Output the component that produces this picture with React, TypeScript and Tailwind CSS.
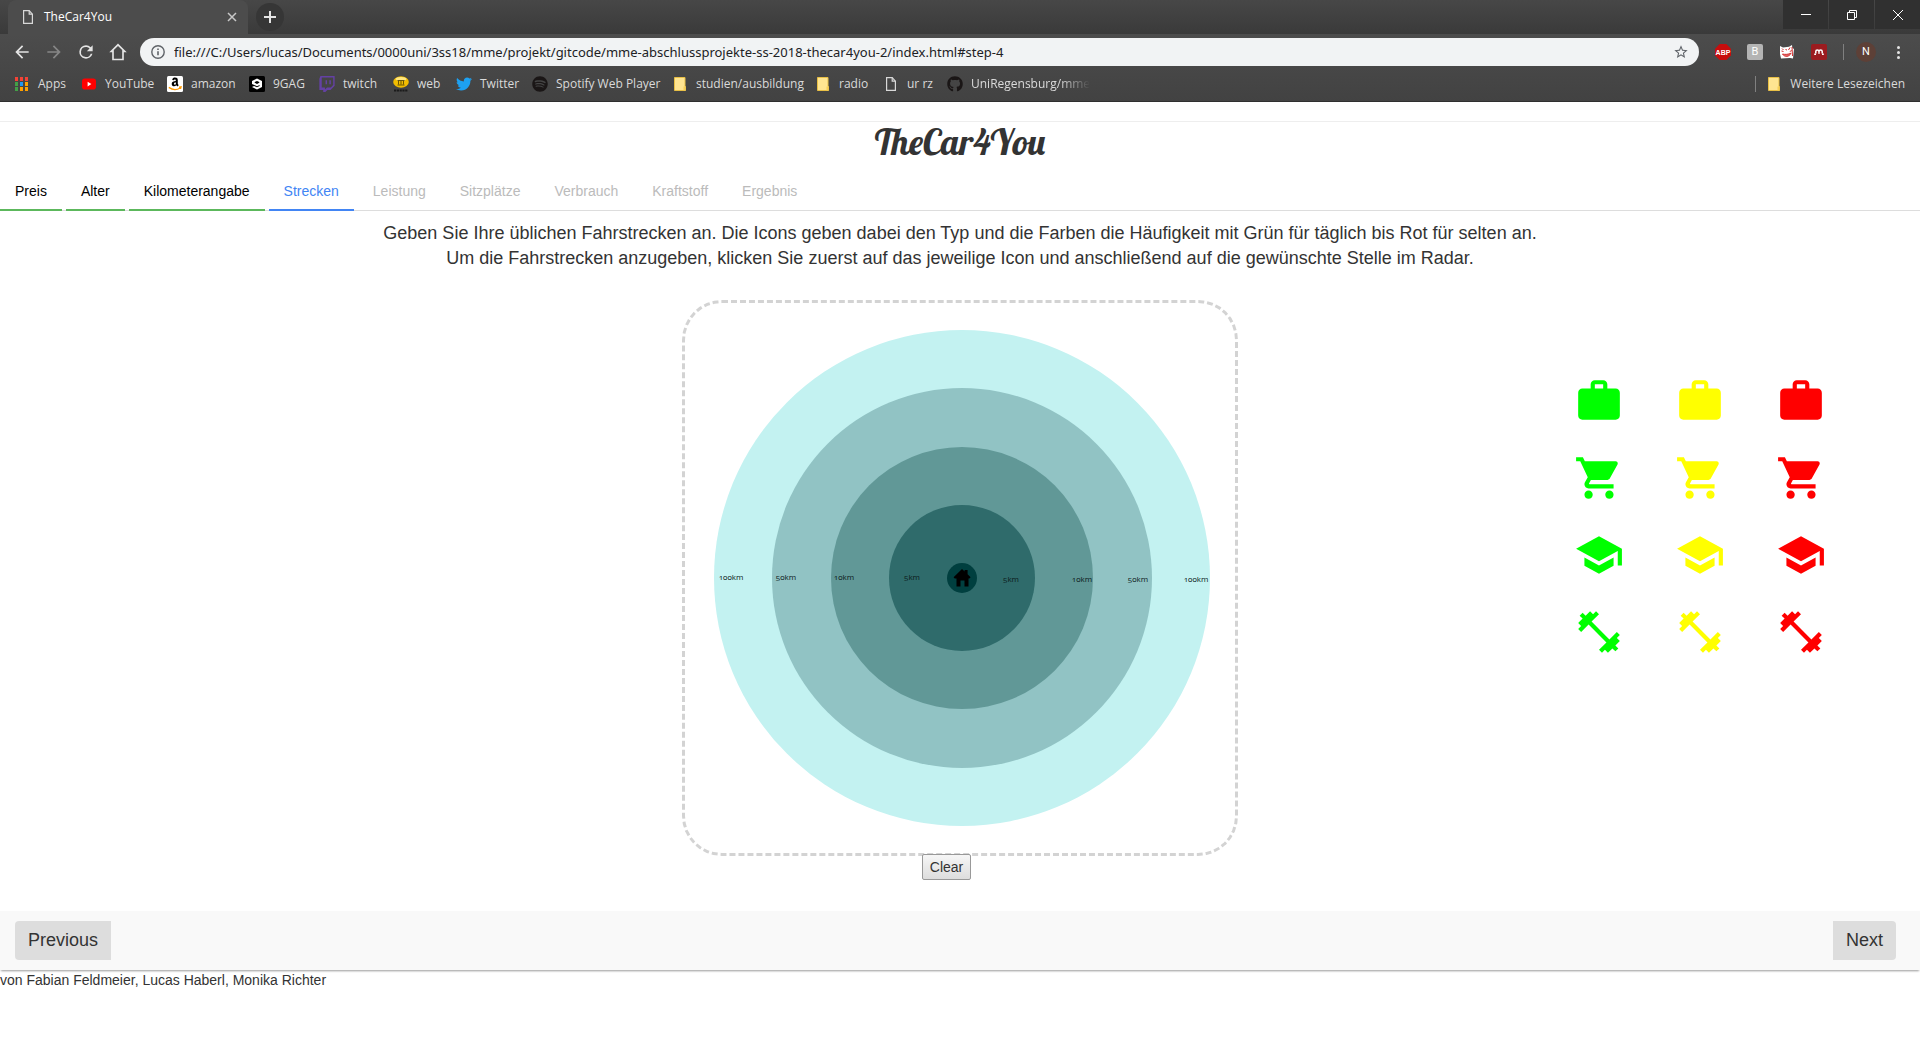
import React from "react";
import { FaGithub, FaSpotify, FaTwitter } from "react-icons/fa";

const uiFont = "font-['Segoe_UI','Open_Sans',sans-serif]";

const FileIcon = () => (
  <svg viewBox="0 0 12 16" className="h-4 w-3" fill="none" stroke="#d8d8d8" strokeWidth="1.2">
    <path d="M1.6 1.6h5.6l3.2 3.6v9.2H1.6z" />
    <path d="M7.2 1.6v3.6h3.2" />
  </svg>
);

const FolderIcon = () => (
  <svg viewBox="0 0 12 14" className="h-3.5 w-3">
    <path d="M0.5 0.5h10.5v9h0.6v4H0.5z" fill="#ffe591" stroke="#e8bf45" />
    <path d="M9.5 13.5V9.5h2v4z" fill="#f6cf57" />
  </svg>
);

const AppsIcon = () => {
  const colors = ["#f44336", "#f44336", "#f44336", "#43a047", "#2196f3", "#ffa000", "#43a047", "#ffa000", "#ffa000"];
  return (
    <svg viewBox="0 0 14 14" className="size-3.5">
      {colors.map((c, i) => (
        <rect key={i} x={(i % 3) * 5} y={Math.floor(i / 3) * 5} width="3" height="4" fill={c} />
      ))}
    </svg>
  );
};

const YouTubeIcon = () => (
  <svg viewBox="0 0 16 16" className="size-4">
    <rect x="1" y="2.6" width="14" height="11" rx="2.8" fill="#f00" />
    <path d="M6.6 5.8v4.6L10.4 8z" fill="#fff" />
  </svg>
);

const AmazonIcon = () => (
  <svg viewBox="0 0 16 16" className="size-4">
    <rect width="16" height="16" rx="1.5" fill="#fff" />
    <path d="M5.2 3.900C5.500 2 6.700 1.600 8 1.600c1.800 0 2.800.8 2.800 2.500v3.500c0 .7.500 1 .9 1.600l-1.300 1.200-1.100-1.200C7.800 11 4.700 10.600 4.700 7.900c0-2.100 1.800-2.700 4.100-2.800 0-1.200-.2-1.600-.9-1.600s-.9.300-1 .8zM8.900 6.400c-1.300 0-1.900.4-1.900 1.400 0 1.400 1.900 1.300 1.900-.6z" fill="#000" />
    <path d="M1.800 11.400c3.600 2.600 8 2.700 11.400.6M12 11.100l2-.2-.5 2" fill="none" stroke="#ff9900" strokeWidth="1.4" />
  </svg>
);

const GagIcon = () => (
  <svg viewBox="0 0 16 16" className="size-4">
    <rect width="16" height="16" rx="1.5" fill="#000" />
    <path
      fillRule="evenodd"
      d="M8 2.500L13 4.900V10.900L8 13.400L3 11L5 9.900L8 11.300L10.600 10V9L8 10.200L3 7.900V4.900zM8 4.900L5.700 6v.8L8 7.900l2.300-1.100V6z"
      fill="#fff"
    />
  </svg>
);

const TwitchIcon = () => (
  <svg viewBox="0 0 24 24" className="size-4" fill="#6441a4">
    <path d="M2.149 0L.537 4.119v16.836h5.731V24h3.224l3.045-3.045h4.657l6.269-6.269V0zm19.164 13.612l-3.582 3.582H12l-3.045 3.045v-3.045H4.119V2.149h17.194zm-3.582-7.343v6.262h-2.149V6.269zm-5.731 0v6.262H9.851V6.269z" />
  </svg>
);

const WebDeIcon = () => (
  <svg viewBox="0 0 16 16" className="size-4">
    <ellipse cx="8" cy="6" rx="7.8" ry="5.8" fill="#f2bd00" />
    <ellipse cx="8" cy="3" rx="5.500" ry="2" fill="#ffe680" />
    <path d="M4.500 4.500h7M5.500 5v3.500M8 5v3.500M10.500 5v3.500M4.500 9h7" stroke="#5a4a00" strokeWidth="0.9" />
    <path d="M1 14.500h14" stroke="#1b1b1b" strokeWidth="2.2" strokeDasharray="2.2 .6" />
  </svg>
);

const bookmarks: { label: string; icon: React.ReactNode; width: string; fade?: boolean }[] = [
  { label: "Apps", icon: <AppsIcon />, width: "w-[67px]" },
  { label: "YouTube", icon: <YouTubeIcon />, width: "w-[86px]" },
  { label: "amazon", icon: <AmazonIcon />, width: "w-[82px]" },
  { label: "9GAG", icon: <GagIcon />, width: "w-[70px]" },
  { label: "twitch", icon: <TwitchIcon />, width: "w-[74px]" },
  { label: "web", icon: <WebDeIcon />, width: "w-[63px]" },
  { label: "Twitter", icon: <FaTwitter className="size-4 text-[#1da1f2]" />, width: "w-[76px]" },
  { label: "Spotify Web Player", icon: <FaSpotify className="size-4 text-[#1a1616]" />, width: "w-[140px]" },
  { label: "studien/ausbildung", icon: <FolderIcon />, width: "w-[143px]" },
  { label: "radio", icon: <FolderIcon />, width: "w-[68px]" },
  { label: "ur rz", icon: <FileIcon />, width: "w-[64px]" },
  { label: "UniRegensburg/mme", icon: <FaGithub className="size-4 text-[#1a1616]" />, width: "w-auto", fade: true },
];

function TitleBar() {
  return (
    <div className="flex h-[34px] items-start bg-linear-to-b from-[#474747] to-[#3a3a3a] pl-2">
      <div className="flex h-[34px] w-60 items-center rounded-t-lg bg-[#4c4c4c] pr-2 pl-3.5 text-xs text-white">
        <FileIcon />
        <span className="ml-2.5 flex-1">TheCar4You</span>
        <button aria-label="Tab schließen" className="flex size-4 items-center justify-center">
          <svg viewBox="0 0 10 10" className="size-2.5" stroke="#c8c8c8" strokeWidth="1.5">
            <path d="M1 1l8 8M9 1l-8 8" />
          </svg>
        </button>
      </div>
      <button aria-label="Neuer Tab" className="mt-[3px] ml-2 flex size-7 items-center justify-center rounded-full bg-[#363636]">
        <svg viewBox="0 0 12 12" className="size-3" stroke="#e4e4e4" strokeWidth="2">
          <path d="M6 0v12M0 6h12" />
        </svg>
      </button>
      <div className="ml-auto flex gap-px">
        <button aria-label="Minimieren" className="flex h-[29px] w-[45px] items-center justify-center bg-[#303030]">
          <svg viewBox="0 0 10 10" className="size-2.5" stroke="#fff"><path d="M0 4.500h10" /></svg>
        </button>
        <button aria-label="Verkleinern" className="flex h-[29px] w-[45px] items-center justify-center bg-[#303030]">
          <svg viewBox="0 0 10 10" className="size-2.5" stroke="#fff" fill="none">
            <path d="M.5 2.500h7v7h-7zM2.500 2.500v-2h7v7h-2" />
          </svg>
        </button>
        <button aria-label="Schließen" className="flex h-[29px] w-[45px] items-center justify-center bg-[#303030]">
          <svg viewBox="0 0 10 10" className="size-2.5" stroke="#fff"><path d="M0 0l10 10M10 0L0 10" /></svg>
        </button>
      </div>
    </div>
  );
}

function NavButton({ label, d, dim }: { label: string; d: string; dim?: boolean }) {
  return (
    <button aria-label={label} className="flex size-5 items-center justify-center">
      <svg viewBox="0 0 24 24" className={dim ? "size-5 text-[#868686]" : "size-5 text-[#e4e4e4]"} fill="currentColor">
        <path d={d} />
      </svg>
    </button>
  );
}

function Toolbar() {
  return (
    <div className="flex h-9 items-center pr-3">
      <div className="flex w-[140px] shrink-0 gap-3 pl-3">
        <NavButton label="Zurück" d="M20 11H7.830l5.590-5.590L12 4l-8 8 8 8 1.410-1.410L7.830 13H20z" />
        <NavButton label="Vorwärts" dim d="M12 4l-1.410 1.410L16.170 11H4v2h12.170l-5.580 5.590L12 20l8-8z" />
        <NavButton label="Neu laden" d="M17.650 6.350A7.950 7.950 0 0 0 12 4a8 8 0 1 0 7.730 10h-2.080A6 6 0 1 1 12 6c1.660 0 3.140.69 4.220 1.780L13 11h7V4z" />
        <NavButton label="Startseite" d="M12 1.800 1.500 12.200H5V22h14v-9.800h3.500zM12 4.700l5 5V20H7V9.700z" />
      </div>
      <div className="flex h-7 flex-1 items-center rounded-full bg-[#f1f3f4] pr-2.5 pl-[11px]">
        <svg viewBox="0 0 14 14" className="size-3.5 shrink-0" fill="none" stroke="#5f6368" strokeWidth="1.4">
          <circle cx="7" cy="7" r="6.200" />
          <path d="M7 6.200v4M7 3.400v1.500" strokeWidth="1.6" />
        </svg>
        <input
          type="text"
          aria-label="Adresse"
          className="ml-[9px] min-w-0 flex-1 bg-transparent font-['Noto_Sans',sans-serif] text-[13px] text-[#202124] outline-none"
          defaultValue="file:///C:/Users/lucas/Documents/0000uni/3ss18/mme/projekt/gitcode/mme-abschlussprojekte-ss-2018-thecar4you-2/index.html#step-4"
        />
        <button aria-label="Lesezeichen setzen">
          <svg viewBox="0 0 24 24" className="size-4" fill="#5f6368">
            <path d="M22 9.240l-7.190-.62L12 2 9.190 8.630 2 9.240l5.460 4.730L5.820 21 12 17.270 18.180 21l-1.630-7.030L22 9.240zM12 15.400l-3.760 2.270 1-4.280-3.320-2.880 4.380-.38L12 6.100l1.710 4.040 4.380.38-3.320 2.880 1 4.280L12 15.400z" />
          </svg>
        </button>
      </div>
      <div className="ml-4 flex items-center gap-4">
        <button aria-label="Adblock Plus" className="flex size-4 items-center justify-center">
          <svg viewBox="0 0 16 16" className="size-4">
            <path d="M4.700 0h6.600L16 4.700v6.600L11.300 16H4.700L0 11.300V4.700z" fill="#c70d0d" />
            <text x="8" y="10.600" textAnchor="middle" fontFamily="Liberation Sans" fontWeight="700" fontSize="7" fill="#fff">ABP</text>
          </svg>
        </button>
        <button className="flex size-4 items-center justify-center rounded-xs bg-[#b4b4b4] font-['Roboto',sans-serif] text-[11px] text-white">B</button>
        <button aria-label="Katze" className="flex size-4 items-center justify-center">
          <svg viewBox="0 0 16 16" className="size-4">
            <path d="M1 2l3 1.500 6-.8L13 1l.3 3L15 5l-1 9.500-3-.6-9 .6L1 10z" fill="#fff" />
            <path d="M3 4.500l1.500 1.500M11 3.500L9.500 6M2.500 7l2 .5M12.800 6.500l-2 1M3.500 10c2 3.500 7 3 8.500-.8-2.500 1.200-6 1.500-8.500.8zM6.500 5.500l1.500.5M13 3l.5 9" fill="#e57373" stroke="#d32f2f" />
          </svg>
        </button>
        <button aria-label="Mendeley" className="flex size-4 items-center justify-center rounded-xs bg-[#9b1b1f]">
          <svg viewBox="0 0 16 16" className="size-4" fill="none" stroke="#fff" strokeWidth="1.5">
            <path d="M4.800 9.500V7.500c0-2 3-2 3.200 0 .2-2 3.200-2 3.200 0v2M8 7.500v1.300" />
            <path d="M3.200 10.200h1.800M11 10.200h1.800M7.400 9.200h1.200" />
          </svg>
        </button>
      </div>
      <div className="ml-4 h-4 w-px bg-[#808080]" />
      <button className="ml-3 flex size-5 items-center justify-center rounded-full bg-[#5d4037] font-['Roboto',sans-serif] text-[11px] text-white">N</button>
      <button aria-label="Menü" className="ml-3 flex w-5 shrink-0 flex-col items-center gap-0.5">
        <span className="size-[3px] rounded-full bg-[#e4e4e4]" />
        <span className="size-[3px] rounded-full bg-[#e4e4e4]" />
        <span className="size-[3px] rounded-full bg-[#e4e4e4]" />
      </button>
    </div>
  );
}

function BookmarkBar() {
  return (
    <div className="flex h-8 items-center border-b border-[#2f2f2f] pr-[15px] pb-[3px] pl-3.5 text-xs text-[#dadada]">
      {bookmarks.map((b) => (
        <a key={b.label} href="#" className={`flex shrink-0 items-center gap-2 whitespace-nowrap ${b.width}`}>
          <span className="flex w-4 shrink-0 justify-center">{b.icon}</span>
          <span className={b.fade ? "mask-r-from-75%" : ""}>{b.label}</span>
        </a>
      ))}
      <div className="ml-auto flex items-center">
        <span className="mr-3 h-4 w-px bg-[#808080]" />
        <a href="#" className="flex items-center gap-2.5">
          <FolderIcon />
          Weitere Lesezeichen
        </a>
      </div>
    </div>
  );
}

const steps = [
  { label: "Preis", state: "done" },
  { label: "Alter", state: "done" },
  { label: "Kilometerangabe", state: "done" },
  { label: "Strecken", state: "active" },
  { label: "Leistung", state: "open" },
  { label: "Sitzplätze", state: "open" },
  { label: "Verbrauch", state: "open" },
  { label: "Kraftstoff", state: "open" },
  { label: "Ergebnis", state: "open" },
];

const stepStyle: Record<string, string> = {
  done: "text-black border-[#5cb85c]",
  active: "text-[#4285f4] border-[#4285f4]",
  open: "text-[#bbbbbb] border-transparent",
};

const rings = [
  { r: 248, fill: "#c3f2f1" },
  { r: 190, fill: "#91c3c4" },
  { r: 131, fill: "#619897" },
  { r: 73, fill: "#2f6b6b" },
  { r: 15, fill: "#003f3f" },
];

const distances = [
  { x: 46, y: 277, text: "100km" },
  { x: 101, y: 277, text: "50km" },
  { x: 159, y: 277, text: "10km" },
  { x: 227, y: 277, text: "5km" },
  { x: 326, y: 279, text: "5km" },
  { x: 397, y: 279, text: "10km" },
  { x: 453, y: 279, text: "50km" },
  { x: 511, y: 279, text: "100km" },
];

function Radar() {
  return (
    <svg viewBox="0 0 550 550" className="block w-full" role="img" aria-label="Radar der Fahrstrecken">
      {rings.map((ring) => (
        <circle key={ring.r} cx="277" cy="275" r={ring.r} fill={ring.fill} />
      ))}
      {distances.map((d) => (
        <text key={d.x} x={d.x} y={d.y} textAnchor="middle" fontFamily="Open Sans, sans-serif" fontSize="8" fill="#0b1a1a" className="oldstyle-nums">
          {d.text}
        </text>
      ))}
      <path d="M277 266l2.600 2.500V267h3v4.300l3 2.900-1.200 1.300H283.500V283.500h-4v-6h-4v6h-4v-8h-1.700l-1.200-1.300z" fill="#000" />
    </svg>
  );
}

const routeTypes = [
  { name: "Arbeit", d: "M20 6h-4V4c0-1.110-.89-2-2-2h-4c-1.110 0-2 .89-2 2v2H4c-1.110 0-1.990.89-1.990 2L2 19c0 1.110.89 2 2 2h16c1.110 0 2-.89 2-2V8c0-1.110-.89-2-2-2zm-6 0h-4V4h4v2z" },
  { name: "Einkaufen", d: "M7 18c-1.100 0-1.990.9-1.990 2S5.900 22 7 22s2-.9 2-2-.9-2-2-2zM1 2v2h2l3.600 7.590-1.350 2.450c-.16.28-.25.61-.25.96 0 1.100.9 2 2 2h12v-2H7.420c-.14 0-.25-.11-.25-.25l.03-.12.9-1.630h7.450c.75 0 1.410-.41 1.750-1.030l3.580-6.490c.08-.14.12-.31.12-.48 0-.55-.45-1-1-1H5.210l-.94-2H1zm16 16c-1.100 0-1.990.9-1.990 2s.89 2 1.990 2 2-.9 2-2-.9-2-2-2z" },
  { name: "Schule", d: "M5 13.180v4L12 21l7-3.820v-4L12 17l-7-3.820zM12 3L1 9l11 6 9-4.910V17h2V9L12 3z" },
  { name: "Sport", d: "M20.570 14.860L22 13.430 20.570 12 17 15.570 8.430 7 12 3.430 10.570 2 9.140 3.430 7.710 2 5.570 4.140 4.140 2.710 2.710 4.140l1.430 1.430L2 7.710l1.430 1.430L2 10.570 3.430 12 7 8.430 15.570 17 12 20.570 13.430 22l1.430-1.430L16.290 22l2.140-2.140 1.430 1.430 1.430-1.430-1.430-1.430L22 16.290z" },
];

const frequencies = [
  { name: "täglich", color: "text-[#00ff00]" },
  { name: "gelegentlich", color: "text-[#ffff00]" },
  { name: "selten", color: "text-[#ff0000]" },
];

function RoutePalette() {
  return (
    <div className="grid grid-cols-3 gap-x-[51px] gap-y-[27px]">
      {routeTypes.map((t) =>
        frequencies.map((f) => (
          <button key={t.name + f.name} aria-label={`${t.name}, ${f.name}`} className={`size-[50px] ${f.color}`}>
            <svg viewBox="0 0 24 24" className="size-full" fill="currentColor">
              <path d={t.d} />
            </svg>
          </button>
        )),
      )}
    </div>
  );
}

export default function App() {
  return (
    <div className="min-h-screen bg-white font-['Liberation_Sans',Arial,sans-serif] text-sm text-[#333333]">
      <header className={uiFont}>
        <TitleBar />
        <div className="bg-linear-to-b from-[#4c4c4c] to-[#424242]">
          <Toolbar />
          <BookmarkBar />
        </div>
      </header>

      <div className="mt-[19px] border-t border-[#eeeeee]">
        <h1 className="pb-2.5 text-center font-['Lobster','Liberation_Serif',serif] text-4xl leading-[39px] text-[#333333]">
          TheCar4You
        </h1>
        <nav className="flex gap-1 border-b border-[#dddddd]">
          {steps.map((s) => (
            <a
              key={s.label}
              href="#"
              className={`-mb-px border-b-2 px-[15px] pt-2.5 pb-2 leading-5 ${stepStyle[s.state]}`}
            >
              {s.label}
            </a>
          ))}
        </nav>
      </div>

      <main>
        <p className="mt-2.5 text-center text-lg leading-[25px]">
          Geben Sie Ihre üblichen Fahrstrecken an. Die Icons geben dabei den Typ und die Farben die Häufigkeit mit Grün für täglich bis Rot für selten an.
          <br />
          Um die Fahrstrecken anzugeben, klicken Sie zuerst auf das jeweilige Icon und anschließend auf die gewünschte Stelle im Radar.
        </p>
        <div className="mt-[29px] grid grid-cols-[1fr_556px_1fr]">
          <div className="col-start-2">
            <div className="rounded-[40px] border-3 border-dashed border-[#d3d3d3]">
              <Radar />
            </div>
            <div className="relative -mt-0.5 flex justify-center pr-[27px]">
              <button className="h-[26px] w-[49px] rounded-xs border border-[#999999] bg-linear-to-b from-[#f6f6f6] to-[#dddddd] text-sm">
                Clear
              </button>
            </div>
          </div>
          <div className="flex items-start justify-end pt-[76px] pr-[94px]">
            <RoutePalette />
          </div>
        </div>
      </main>

      <div className="mt-[31px] flex justify-between bg-[#f9f9f9] py-2.5 pr-6 pl-[15px] text-lg shadow-[0_2px_2px_-1px_rgba(0,0,0,0.4)]">
        <button className="h-[39px] rounded-l-sm bg-[#dddddd] px-[13px] pb-0.5">Previous</button>
        <button className="h-[39px] rounded-r-sm bg-[#dddddd] px-[13px] pb-0.5">Next</button>
      </div>
      <footer className="leading-5">von Fabian Feldmeier, Lucas Haberl, Monika Richter</footer>
    </div>
  );
}
